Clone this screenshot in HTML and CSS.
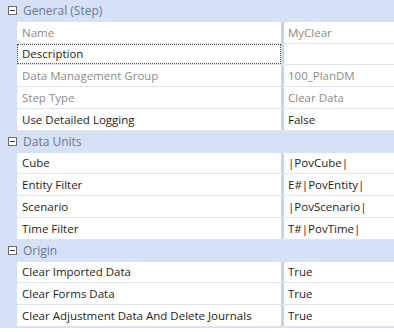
FILE: index.html
```html
<!DOCTYPE html>
<html lang="en">
<head>
  <meta charset="UTF-8">
  <title>Step Properties</title>
  <link rel="stylesheet" href="styles.css">
</head>
<body>
<div class="grid">
  <div class="cat"><span class="toggle"></span>General (Step)</div>
  <div class="row"><div class="name ro">Name</div><div class="value ro">MyClear</div></div>
  <div class="row"><div class="name focus">Description</div><div class="value"></div></div>
  <div class="row"><div class="name ro">Data Management Group</div><div class="value ro">100_PlanDM</div></div>
  <div class="row"><div class="name ro">Step Type</div><div class="value ro">Clear Data</div></div>
  <div class="row"><div class="name">Use Detailed Logging</div><div class="value">False</div></div>

  <div class="cat"><span class="toggle"></span>Data Units</div>
  <div class="row"><div class="name">Cube</div><div class="value">|PovCube|</div></div>
  <div class="row"><div class="name">Entity Filter</div><div class="value">E#|PovEntity|</div></div>
  <div class="row"><div class="name">Scenario</div><div class="value">|PovScenario|</div></div>
  <div class="row"><div class="name">Time Filter</div><div class="value">T#|PovTime|</div></div>

  <div class="cat"><span class="toggle"></span>Origin</div>
  <div class="row"><div class="name">Clear Imported Data</div><div class="value">True</div></div>
  <div class="row"><div class="name">Clear Forms Data</div><div class="value">True</div></div>
  <div class="row"><div class="name">Clear Adjustment Data And Delete Journals</div><div class="value">True</div></div>
</div>
</body>
</html>
```

FILE: styles.css
```css
body {
  margin: 0;
  padding: 0;
  background: #fff;
  font-family: "Open Sans", "Noto Sans", sans-serif;
  font-size: 11.5px;
  color: #1e1e1e;
}

.grid {
  width: 394px;
  background: #d6e1f5;
  padding-bottom: 1px;
}

.cat {
  height: 21.8px;
  display: flex;
  align-items: center;
  color: #66789c;
  font-size: 12px;
}

.toggle {
  width: 7px;
  height: 7px;
  border: 1px solid #6b6b6b;
  margin: 0 6px 0 8px;
  position: relative;
  background: #fff;
}

.toggle::after {
  content: "";
  position: absolute;
  left: 1px;
  right: 1px;
  top: 3px;
  height: 1px;
  background: #444;
}

.row {
  height: 21.8px;
  margin-left: 17px;
  display: grid;
  grid-template-columns: 264px 1fr;
  background: #fff;
  border-bottom: 1px solid #dfe5ef;
  box-sizing: border-box;
}

.name, .value {
  display: flex;
  align-items: center;
  white-space: nowrap;
  overflow: hidden;
  padding-left: 5px;
  box-sizing: border-box;
}

.value {
  border-left: 3px solid #c8d4ea;
  padding-left: 4px;
}

.name.focus {
  border: 1px dotted #555;
  padding-left: 4px;
}

.ro {
  color: #8c8c8c;
}
```
